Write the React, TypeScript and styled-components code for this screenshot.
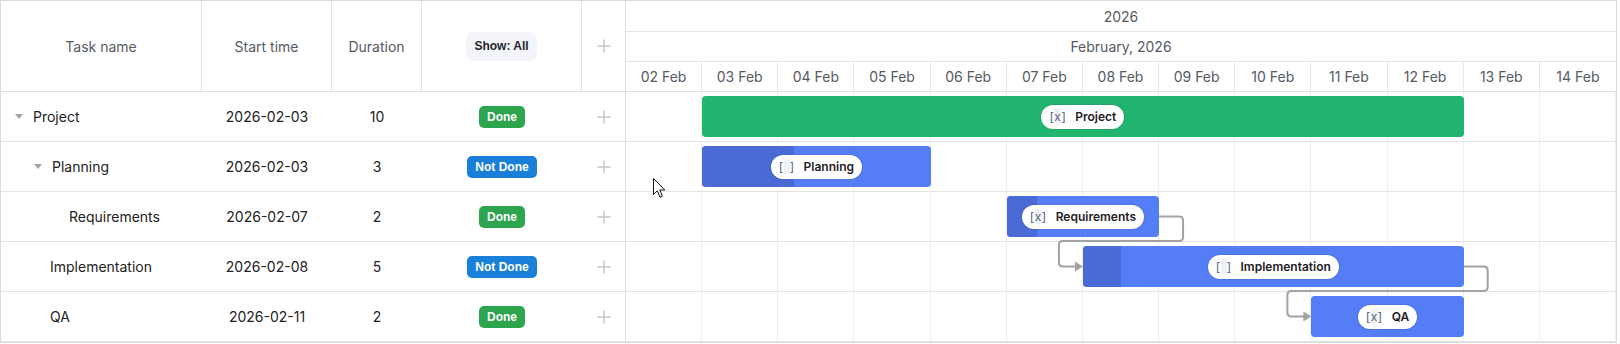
import React from "react";
import styled, { createGlobalStyle } from "styled-components";

const GlobalStyle = createGlobalStyle`
  html, body { margin: 0; padding: 0; background: #ffffff; }
  body { font-family: Inter, "Noto Sans", Arial, sans-serif; }
  * { box-sizing: border-box; }
`;

const COLS = 13;
const CHART_W = 990;
const COL_W = CHART_W / COLS;
const ROW_H = 50;
const GRID_COLS = "201px 130px 90px 160px 43px";

type Task = {
  name: string;
  start: string;
  day: number;
  duration: number;
  done: boolean;
  level: number;
  toggle: boolean;
  progress: number;
  kind: "project" | "task";
};

const tasks: Task[] = [
  { name: "Project", start: "2026-02-03", day: 1, duration: 10, done: true, level: 0, toggle: true, progress: 0, kind: "project" },
  { name: "Planning", start: "2026-02-03", day: 1, duration: 3, done: false, level: 1, toggle: true, progress: 40, kind: "task" },
  { name: "Requirements", start: "2026-02-07", day: 5, duration: 2, done: true, level: 2, toggle: false, progress: 20, kind: "task" },
  { name: "Implementation", start: "2026-02-08", day: 6, duration: 5, done: false, level: 1, toggle: false, progress: 10, kind: "task" },
  { name: "QA", start: "2026-02-11", day: 9, duration: 2, done: true, level: 1, toggle: false, progress: 0, kind: "task" },
];

const days = ["02", "03", "04", "05", "06", "07", "08", "09", "10", "11", "12", "13", "14"];

const links: [number, number][] = [
  [2, 3],
  [3, 4],
];

const Gantt = styled.div`
  display: flex;
  width: 1617px;
  border: 1px solid #dadada;
  background: #fff;
`;

const Grid = styled.div`
  flex: none;
  width: 625px;
  border-right: 1px solid #dcdcdc;
`;

const GridHeader = styled.div`
  display: grid;
  grid-template-columns: ${GRID_COLS};
  height: 91px;
  border-bottom: 1px solid #e0e0e0;
`;

const HeadCell = styled.div<{ $last?: boolean }>`
  display: flex;
  align-items: center;
  justify-content: center;
  border-right: ${(p) => (p.$last ? "none" : "1px solid #e2e2e2")};
  font-size: 14px;
  color: #555a63;
`;

const ShowButton = styled.button`
  height: 29px;
  padding: 0 8px;
  border: none;
  border-radius: 8px;
  background: #f3f5fa;
  font-family: "Liberation Sans", Arial, sans-serif;
  font-weight: 700;
  font-size: 12px;
  color: #23262b;
  cursor: pointer;
`;

const GridRow = styled.div`
  display: grid;
  grid-template-columns: ${GRID_COLS};
  align-items: center;
  height: ${ROW_H}px;
  border-bottom: 1px solid #e4e4e4;
`;

const NameCell = styled.div<{ $level: number }>`
  display: flex;
  align-items: center;
  padding-left: ${(p) => 11 + p.$level * 19}px;
  font-size: 14px;
  color: #222;
`;

const Toggle = styled.span`
  flex: none;
  display: flex;
  justify-content: center;
  width: 14px;
  margin-right: 7px;
  &::before {
    content: "";
    border-left: 4.5px solid transparent;
    border-right: 4.5px solid transparent;
    border-top: 5px solid #a3a3a3;
  }
`;

const Spacer = styled.span`
  flex: none;
  width: 19px;
`;

const CenterCell = styled.div`
  display: flex;
  align-items: center;
  justify-content: center;
  font-size: 14px;
  color: #222;
`;

const Badge = styled.span<{ $done: boolean }>`
  padding: 4px 8px;
  border-radius: 5px;
  line-height: 14px;
  background: ${(p) => (p.$done ? "#2da44e" : "#1a7fd8")};
  color: #fff;
  font-family: "Liberation Sans", Arial, sans-serif;
  font-weight: 700;
  font-size: 12px;
`;

const Chart = styled.div`
  flex: 1;
  min-width: 0;
  display: flex;
  flex-direction: column;
`;

const ScaleRow = styled.div<{ $h: number }>`
  display: flex;
  align-items: center;
  justify-content: center;
  height: ${(p) => p.$h}px;
  border-bottom: 1px solid #e4e4e4;
  font-size: 14px;
  color: #555a63;
`;

const DayScale = styled.div`
  display: grid;
  grid-template-columns: repeat(${COLS}, 1fr);
  height: 30px;
  border-bottom: 1px solid #e0e0e0;
`;

const DayLabel = styled.div`
  display: flex;
  align-items: center;
  justify-content: center;
  border-right: 1px solid #e8e8e8;
  font-size: 14px;
  color: #555a63;
  &:last-child {
    border-right: none;
  }
`;

const ChartBody = styled.div`
  position: relative;
`;

const ChartRow = styled.div`
  position: relative;
  display: grid;
  grid-template-columns: repeat(${COLS}, 1fr);
  height: ${ROW_H}px;
  border-bottom: 1px solid #e4e4e4;
`;

const DayCell = styled.div`
  border-right: 1px solid #eeeeee;
  &:last-child {
    border-right: none;
  }
`;

const Bar = styled.div<{ $kind: "project" | "task" }>`
  position: absolute;
  top: 4px;
  height: 41px;
  display: flex;
  align-items: center;
  justify-content: center;
  border-radius: 4px;
  overflow: hidden;
  background: ${(p) => (p.$kind === "project" ? "#22b570" : "#547df6")};
`;

const Progress = styled.div`
  position: absolute;
  left: 0;
  top: 0;
  bottom: 0;
  background: #4a6bd6;
`;

const Label = styled.span`
  position: relative;
  display: inline-flex;
  align-items: center;
  gap: 9px;
  height: 24px;
  padding: 0 8px 0 8px;
  border-radius: 12px;
  background: #fff;
  box-shadow: 0 0 0 1px rgba(40, 50, 80, 0.12);
  font-size: 12px;
  font-weight: 600;
  color: #1f2024;
  white-space: nowrap;
`;

const Check = styled.span`
  font-weight: 400;
  color: #56627c;
  letter-spacing: 0.5px;
`;

const CheckMark = styled.span`
  display: inline-block;
  min-width: 6px;
  background: #eef1f6;
  border-radius: 2px;
`;

const LinksLayer = styled.svg`
  position: absolute;
  left: 0;
  top: 0;
  pointer-events: none;
  overflow: visible;
`;

const Cursor = styled.svg`
  position: absolute;
  left: 27px;
  top: 86px;
  pointer-events: none;
`;

const PlusIcon = () => (
  <svg width="14" height="14" viewBox="0 0 14 14">
    <path d="M7 0.5V13.5M0.5 7H13.5" stroke="#c6c6c6" strokeWidth="1.4" />
  </svg>
);

function roundedPath(pts: [number, number][], r: number) {
  let d = `M${pts[0][0]},${pts[0][1]}`;
  for (let i = 1; i < pts.length - 1; i++) {
    const [px, py] = pts[i - 1];
    const [cx, cy] = pts[i];
    const [nx, ny] = pts[i + 1];
    const d1 = Math.hypot(cx - px, cy - py);
    const d2 = Math.hypot(nx - cx, ny - cy);
    const r1 = Math.min(r, d1 / 2, d2 / 2);
    const bx = cx - ((cx - px) / d1) * r1;
    const by = cy - ((cy - py) / d1) * r1;
    const ax = cx + ((nx - cx) / d2) * r1;
    const ay = cy + ((ny - cy) / d2) * r1;
    d += ` L${bx},${by} Q${cx},${cy} ${ax},${ay}`;
  }
  const last = pts[pts.length - 1];
  d += ` L${last[0]},${last[1]}`;
  return d;
}

const LinkPath = ({ from, to }: { from: number; to: number }) => {
  const a = tasks[from];
  const b = tasks[to];
  const x1 = (a.day + a.duration) * COL_W;
  const y1 = from * ROW_H + 24.5;
  const x2 = b.day * COL_W;
  const y2 = to * ROW_H + 24.5;
  const midY = to * ROW_H - 1;
  const pts: [number, number][] = [
    [x1, y1],
    [x1 + 24, y1],
    [x1 + 24, midY],
    [x2 - 24, midY],
    [x2 - 24, y2],
    [x2 - 7, y2],
  ];
  return (
    <g>
      <path d={roundedPath(pts, 4)} fill="none" stroke="#a2a2a2" strokeWidth="2" strokeLinejoin="round" />
      <polygon points={`${x2},${y2} ${x2 - 8},${y2 - 5} ${x2 - 8},${y2 + 5}`} fill="#a2a2a2" />
    </g>
  );
};

export default function App() {
  return (
    <>
      <GlobalStyle />
      <Gantt>
        <Grid>
          <GridHeader>
            <HeadCell>Task name</HeadCell>
            <HeadCell>Start time</HeadCell>
            <HeadCell>Duration</HeadCell>
            <HeadCell>
              <ShowButton>Show: All</ShowButton>
            </HeadCell>
            <HeadCell $last>
              <PlusIcon />
            </HeadCell>
          </GridHeader>
          {tasks.map((t) => (
            <GridRow key={t.name}>
              <NameCell $level={t.level}>
                {t.toggle ? <Toggle /> : <Spacer />}
                {t.name}
              </NameCell>
              <CenterCell>{t.start}</CenterCell>
              <CenterCell>{t.duration}</CenterCell>
              <CenterCell>
                <Badge $done={t.done}>{t.done ? "Done" : "Not Done"}</Badge>
              </CenterCell>
              <CenterCell>
                <PlusIcon />
              </CenterCell>
            </GridRow>
          ))}
        </Grid>
        <Chart>
          <ScaleRow $h={31}>2026</ScaleRow>
          <ScaleRow $h={30}>February, 2026</ScaleRow>
          <DayScale>
            {days.map((d) => (
              <DayLabel key={d}>{d} Feb</DayLabel>
            ))}
          </DayScale>
          <ChartBody>
            {tasks.map((t) => (
              <ChartRow key={t.name}>
                {days.map((d) => (
                  <DayCell key={d} />
                ))}
                <Bar $kind={t.kind} style={{ left: t.day * COL_W, width: t.duration * COL_W }}>
                  {t.kind === "task" && t.progress > 0 && <Progress style={{ width: `${t.progress}%` }} />}
                  <Label>
                    <Check>
                      [<CheckMark>{t.done ? "x" : "\u00a0"}</CheckMark>]
                    </Check>
                    {t.name}
                  </Label>
                </Bar>
              </ChartRow>
            ))}
            <LinksLayer width={CHART_W} height={ROW_H * tasks.length}>
              {links.map(([f, to]) => (
                <LinkPath key={`${f}-${to}`} from={f} to={to} />
              ))}
            </LinksLayer>
            <Cursor width="13" height="21" viewBox="0 0 13 21">
              <path
                d="M0.5 0.5 L0.5 16.5 L4.3 12.8 L7 19.2 L9.4 18.2 L6.8 12 L11.8 12 Z"
                fill="#fff"
                stroke="#111"
                strokeWidth="1"
                strokeLinejoin="round"
              />
            </Cursor>
          </ChartBody>
        </Chart>
      </Gantt>
    </>
  );
}
